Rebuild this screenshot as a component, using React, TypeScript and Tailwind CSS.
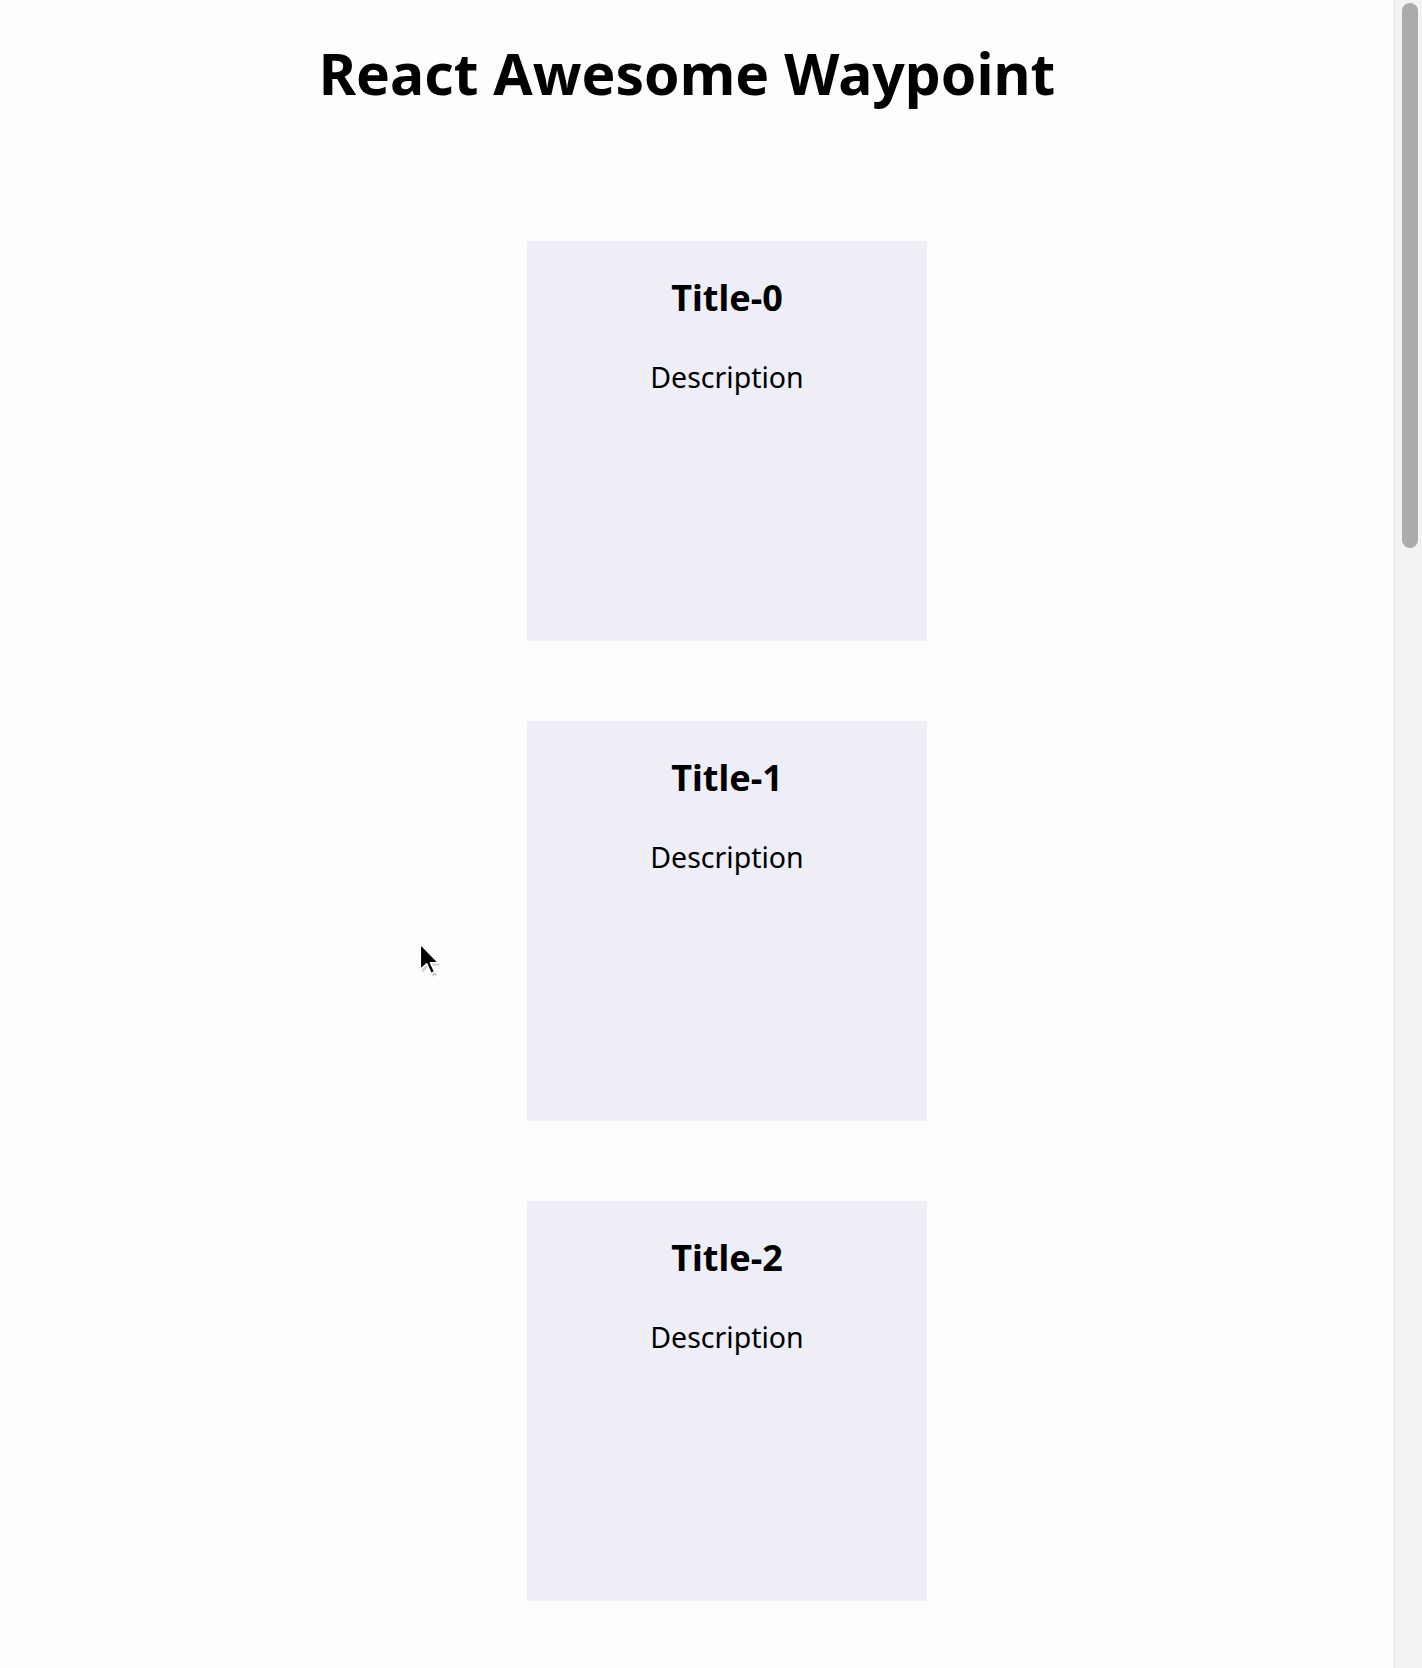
import React from 'react'

const CARDS = [0, 1, 2]

function Cursor() {
  return (
    <svg className="absolute left-[417px] top-[940px]" width="28" height="40" viewBox="0 0 26 36">
      <path d="M4.5 5 L4.5 30 L10.5 24.5 L15 33.5 L18.5 32 L14.5 23 L22 23 Z" fill="#9a9a9a" opacity="0.45" />
      <path d="M3 3 L3 27 L9 21.5 L13 30.5 L16.5 29 L12.5 20.5 L20 20.5 Z" fill="#000" stroke="#fff" strokeWidth="1.5" strokeLinejoin="round" />
    </svg>
  )
}

export default function App() {
  return (
    <div className="relative flex h-[1668px] w-full overflow-hidden bg-[#fdfdfd] font-['Noto_Sans','Noto_Sans_CJK_KR',sans-serif] text-black">
      <main className="flex-1 flex flex-col">
        <h1 className="pt-[33px] pr-[20px] text-center text-[57px] leading-[80px] font-bold">React Awesome Waypoint</h1>

        <div className="flex flex-col items-center gap-[80px] pt-[128px] pl-[60px]">
          {CARDS.map(i => (
            <section key={i} className="w-[400px] h-[400px] bg-[#eeeef7] flex flex-col items-center pt-[33px]">
              <h2 className="text-[36px] leading-[48px] font-bold">Title-{i}</h2>
              <p className="mt-[35px] text-[28.5px] leading-[40px]">Description</p>
            </section>
          ))}
        </div>
      </main>

      {/* scrollbar */}
      <div className="w-[28px] shrink-0 border-l border-[#e4e4ea] bg-[#f3f3f6] pl-[7px] pt-[3px]">
        <div className="w-[16px] h-[545px] rounded-full bg-[#ababab]" />
      </div>

      <Cursor />
    </div>
  )
}
